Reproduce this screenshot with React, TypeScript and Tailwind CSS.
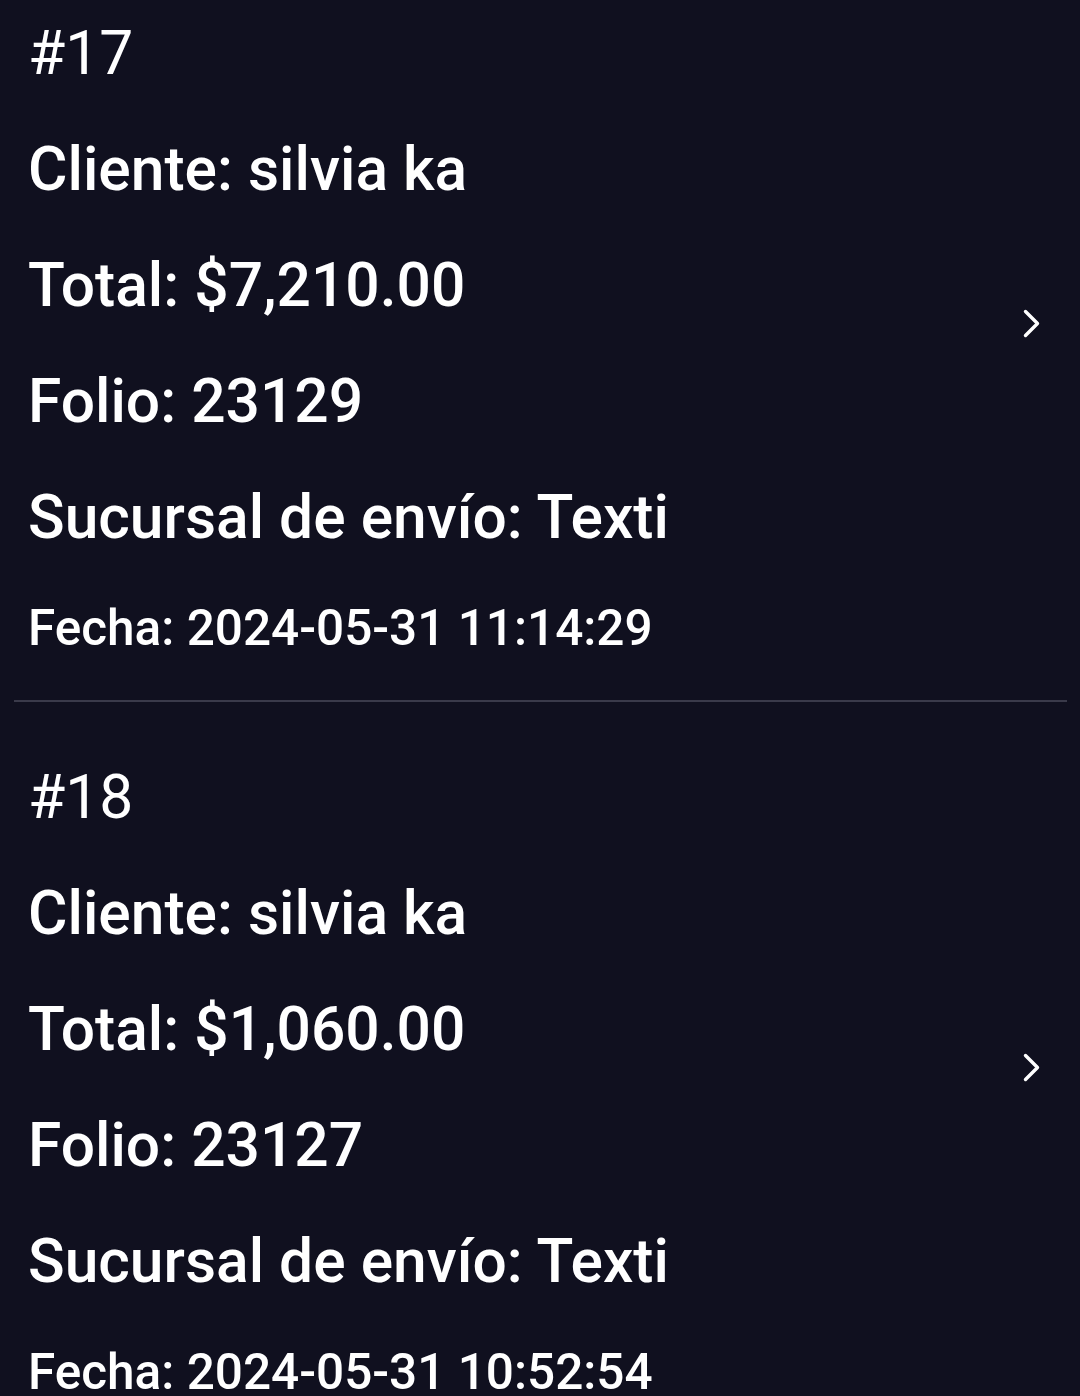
const orders = [
  {
    num: 17,
    cliente: "silvia ka",
    total: "$7,210.00",
    folio: "23129",
    sucursal: "Texti",
    fecha: "2024-05-31 11:14:29",
  },
  {
    num: 18,
    cliente: "silvia ka",
    total: "$1,060.00",
    folio: "23127",
    sucursal: "Texti",
    fecha: "2024-05-31 10:52:54",
  },
];

const Chevron = () => (
  <svg width="17" height="29" viewBox="0 0 17 29" fill="none" className="mb-[30px] shrink-0">
    <polyline
      points="2.5,2.5 14.5,14.5 2.5,26.5"
      stroke="#ffffff"
      strokeWidth="3.4"
      strokeLinecap="round"
      strokeLinejoin="round"
    />
  </svg>
);

const OrderItem = ({ order }: { order: (typeof orders)[number] }) => (
  <div>
    <div className="flex items-center pl-[28px] pr-[40px] pt-[38px] pb-[20px]">
      <div className="flex-1 text-white">
        <p className="text-[60.5px] leading-[116px] font-normal">#{order.num}</p>
        <p className="text-[60.5px] leading-[116px] font-medium">Cliente: {order.cliente}</p>
        <p className="text-[60.5px] leading-[116px] font-medium">Total: {order.total}</p>
        <p className="text-[60.5px] leading-[116px] font-medium">Folio: {order.folio}</p>
        <p className="text-[60.5px] leading-[116px] font-medium">Sucursal de envío: {order.sucursal}</p>
        <p className="text-[49.5px] leading-[104px] font-medium">Fecha: {order.fecha}</p>
      </div>
      <Chevron />
    </div>
    <div className="ml-[14px] mr-[13px] h-[2px] bg-[#3a3a4a]" />
  </div>
);

export default function App() {
  return (
    <div
      className="h-[1396px] overflow-hidden bg-[#10101f]"
      style={{ fontFamily: 'Roboto, "Noto Sans", sans-serif' }}
    >
      <div className="-mt-[42px]">
        {orders.map((o) => (
          <OrderItem key={o.num} order={o} />
        ))}
      </div>
    </div>
  );
}
